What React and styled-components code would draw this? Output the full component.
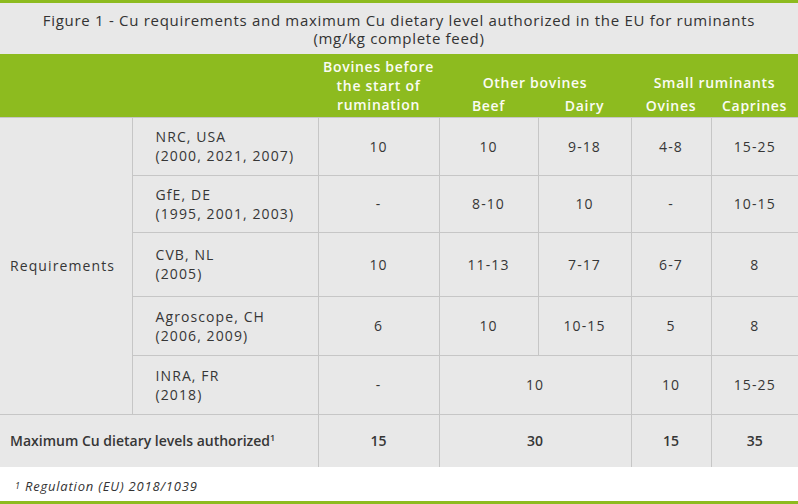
import React from "react";
import styled, { createGlobalStyle } from "styled-components";

const GREEN = "#8dbb1f";
const CELL_BG = "#e8e8e8";
const LINE = "#c6c6c6";
const TEXT = "#363636";

const GlobalStyle = createGlobalStyle`
  html, body {
    margin: 0;
    padding: 0;
    background: #ffffff;
  }
  body {
    font-family: "Open Sans", "Liberation Sans", sans-serif;
    color: ${TEXT};
  }
`;

const Figure = styled.div`
  width: 798px;
  height: 504px;
  box-sizing: border-box;
  border-top: 3px solid ${GREEN};
  border-bottom: 3px solid ${GREEN};
  display: flex;
  flex-direction: column;
`;

const Caption = styled.div`
  height: 51px;
  background: ${CELL_BG};
  display: flex;
  flex-direction: column;
  justify-content: center;
  align-items: center;
  font-size: 15px;
  letter-spacing: 0.7px;
  line-height: 18px;
  color: #333333;
  text-align: center;
`;

const Table = styled.table`
  width: 798px;
  border-collapse: collapse;
  table-layout: fixed;
  background: ${CELL_BG};
  font-size: 14px;
`;

const HeadRow = styled.tr`
  height: ${(props) => props.$height}px;
  background: ${GREEN};
`;

const HeadCell = styled.th`
  padding: 0 0 ${(props) => props.$pb || 0}px;
  font-weight: 600;
  letter-spacing: 0.7px;
  color: #fbfbf4;
  line-height: 19px;
  text-align: center;
  vertical-align: ${(props) => props.$valign || "middle"};
`;

const Row = styled.tr`
  height: ${(props) => props.$height}px;
`;

const Cell = styled.td`
  padding: ${(props) => (props.$left ? `0 0 0 ${props.$left}px` : "0")};
  border: 1px solid ${LINE};
  border-left: ${(props) => (props.$first ? "none" : `1px solid ${LINE}`)};
  border-right: ${(props) => (props.$last ? "none" : `1px solid ${LINE}`)};
  border-bottom: ${(props) => (props.$bottom ? "none" : `1px solid ${LINE}`)};
  text-align: ${(props) => (props.$left ? "left" : "center")};
  font-weight: ${(props) => (props.$strong ? 600 : 400)};
  letter-spacing: ${(props) => (props.$strong ? "0" : "1.1px")};
  line-height: 19px;
  vertical-align: middle;
`;

const Sup = styled.sup`
  font-size: 9px;
  line-height: 0;
  vertical-align: 5px;
`;

const Footnote = styled.div`
  flex: 1;
  display: flex;
  align-items: center;
  padding: 3px 0 0 15px;
  font-size: 13px;
  letter-spacing: 0.8px;
  font-style: italic;
  color: #333333;
`;

const rows = [
  { height: 58, source: ["NRC, USA", "(2000, 2021, 2007)"], values: ["10", "10", "9-18", "4-8", "15-25"] },
  { height: 57, source: ["GfE, DE", "(1995, 2001, 2003)"], values: ["-", "8-10", "10", "-", "10-15"] },
  { height: 64, source: ["CVB, NL", "(2005)"], values: ["10", "11-13", "7-17", "6-7", "8"] },
  { height: 59, source: ["Agroscope, CH", "(2006, 2009)"], values: ["6", "10", "10-15", "5", "8"] },
];

export default function App() {
  return (
    <>
      <GlobalStyle />
      <Figure>
        <Caption>
          <div>Figure 1 - Cu requirements and maximum Cu dietary level authorized in the EU for ruminants</div>
          <div>(mg/kg complete feed)</div>
        </Caption>
        <Table>
          <colgroup>
            <col style={{ width: 132 }} />
            <col style={{ width: 186 }} />
            <col style={{ width: 121 }} />
            <col style={{ width: 99 }} />
            <col style={{ width: 93 }} />
            <col style={{ width: 80 }} />
            <col style={{ width: 87 }} />
          </colgroup>
          <thead>
            <HeadRow $height={40}>
              <HeadCell colSpan={2} rowSpan={2} />
              <HeadCell rowSpan={2}>
                Bovines before
                <br />
                the start of
                <br />
                rumination
              </HeadCell>
              <HeadCell colSpan={2} $valign="bottom" $pb={2}>Other bovines</HeadCell>
              <HeadCell colSpan={2} $valign="bottom" $pb={2}>Small ruminants</HeadCell>
            </HeadRow>
            <HeadRow $height={23}>
              <HeadCell>Beef</HeadCell>
              <HeadCell>Dairy</HeadCell>
              <HeadCell>Ovines</HeadCell>
              <HeadCell>Caprines</HeadCell>
            </HeadRow>
          </thead>
          <tbody>
            {rows.map((row, i) => (
              <Row key={row.source[0]} $height={row.height}>
                {i === 0 && (
                  <Cell $first rowSpan={5} $left={10}>
                    Requirements
                  </Cell>
                )}
                <Cell $left={23}>
                  {row.source[0]}
                  <br />
                  {row.source[1]}
                </Cell>
                {row.values.map((v, j) => (
                  <Cell key={j} $last={j === row.values.length - 1}>
                    {v}
                  </Cell>
                ))}
              </Row>
            ))}
            <Row $height={59}>
              <Cell $left={23}>
                INRA, FR
                <br />
                (2018)
              </Cell>
              <Cell>-</Cell>
              <Cell colSpan={2}>10</Cell>
              <Cell>10</Cell>
              <Cell $last>15-25</Cell>
            </Row>
            <Row $height={53}>
              <Cell $first $bottom colSpan={2} $left={10} $strong>
                Maximum Cu dietary levels authorized<Sup>1</Sup>
              </Cell>
              <Cell $bottom $strong>15</Cell>
              <Cell $bottom colSpan={2} $strong>30</Cell>
              <Cell $bottom $strong>15</Cell>
              <Cell $bottom $last $strong>35</Cell>
            </Row>
          </tbody>
        </Table>
        <Footnote>
          <Sup>1</Sup>&nbsp;Regulation (EU) 2018/1039
        </Footnote>
      </Figure>
    </>
  );
}
